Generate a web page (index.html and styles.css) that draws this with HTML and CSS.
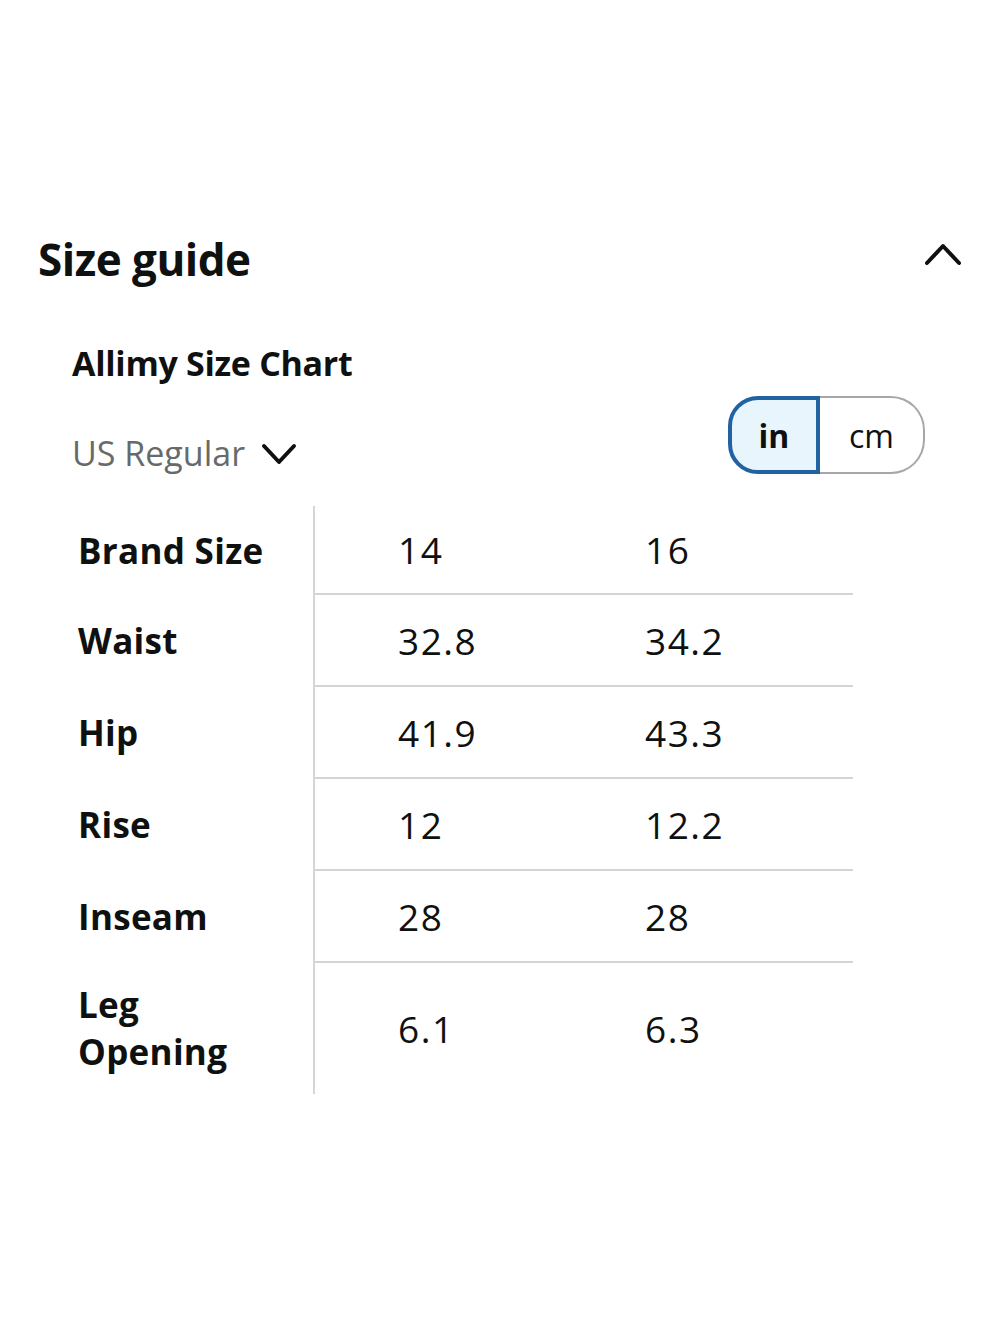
FILE: index.html
```html
<!DOCTYPE html>
<html lang="en">
<head>
<meta charset="utf-8">
<title>Size guide</title>
<link rel="stylesheet" href="styles.css">
</head>
<body>
<div class="page">
  <div class="header">
    <h1 class="title">Size guide</h1>
    <svg class="chev-up" width="38" height="26" viewBox="0 0 38 26"><path d="M3 22 L19 5 L35 22" fill="none" stroke="#0f1111" stroke-width="4" stroke-linecap="round" stroke-linejoin="round"/></svg>
  </div>
  <div class="section">
    <h2 class="chart-title">Allimy Size Chart</h2>
    <div class="controls">
      <div class="region">
        <span>US Regular</span>
        <svg class="chev-down" width="36" height="26" viewBox="0 0 36 26"><path d="M3 5 L18 21 L33 5" fill="none" stroke="#0f1111" stroke-width="4" stroke-linecap="round" stroke-linejoin="round"/></svg>
      </div>
      <div class="toggle">
        <div class="seg seg-on">in</div>
        <div class="seg seg-off">cm</div>
      </div>
    </div>
    <table class="chart">
      <tr><th>Brand Size</th><td class="c1">14</td><td class="c2">16</td></tr>
      <tr><th>Waist</th><td class="c1">32.8</td><td class="c2">34.2</td></tr>
      <tr><th>Hip</th><td class="c1">41.9</td><td class="c2">43.3</td></tr>
      <tr><th>Rise</th><td class="c1">12</td><td class="c2">12.2</td></tr>
      <tr><th>Inseam</th><td class="c1">28</td><td class="c2">28</td></tr>
      <tr class="last"><th>Leg<br>Opening</th><td class="c1">6.1</td><td class="c2">6.3</td></tr>
    </table>
  </div>
</div>
</body>
</html>
```

FILE: styles.css
```css
* { box-sizing: border-box; }
body {
  margin: 0;
  background: #fff;
  color: #0f1111;
  font-family: "Open Sans", "Noto Sans", Arial, sans-serif;
}
.page {
  padding-top: 224px;
}
.header {
  display: flex;
  justify-content: space-between;
  align-items: center;
  padding: 0 38px;
  height: 70px;
}
.title {
  margin: 0;
  font-size: 44px;
  font-weight: 700;
  line-height: 70px;
  letter-spacing: -0.5px;
}
.chev-up {
  margin-top: -10px;
  margin-right: 0;
}
.section {
  padding-left: 72px;
  margin-top: 44px;
}
.chart-title {
  margin: 0;
  font-size: 34px;
  font-weight: 700;
  line-height: 50px;
  letter-spacing: -0.3px;
}
.controls {
  display: flex;
  justify-content: space-between;
  align-items: flex-start;
  width: 853px;
  margin-top: 8px;
}
.region {
  display: flex;
  align-items: center;
  gap: 16px;
  margin-top: 35px;
  font-size: 34px;
  line-height: 44px;
  color: #666a6a;
}
.chev-down {
  margin-top: 2px;
}
.toggle {
  display: flex;
  height: 78px;
  width: 197px;
}
.seg {
  display: flex;
  align-items: center;
  justify-content: center;
  font-size: 32px;
}
.seg-on {
  width: 92px;
  background: #e9f5fd;
  border: 4px solid #2162a1;
  border-radius: 30px 0 0 30px;
  font-weight: 700;
}
.seg-off {
  flex: 1;
  border: 2px solid #a6a8a8;
  border-left: 0;
  border-radius: 0 34px 34px 0;
}
.chart {
  border-collapse: collapse;
  margin-top: 31px;
  margin-left: 6px;
}
.chart th {
  width: 236px;
  height: 92px;
  padding: 0;
  text-align: left;
  font-size: 35px;
  font-weight: 700;
  line-height: 47px;
  border-right: 2px solid #d5d5d5;
  letter-spacing: 0.3px;
}
.chart td {
  height: 92px;
  padding: 0 0 0 83px;
  font-size: 37px;
  letter-spacing: 1.5px;
  border-bottom: 2px solid #d5d5d5;
}
.chart td.c1 { width: 248px; }
.chart td.c2 { width: 291px; }
.chart tr:first-child th,
.chart tr:first-child td { height: 88px; }
.chart tr.last th,
.chart tr.last td {
  height: 132px;
  border-bottom: 0;
}
```
